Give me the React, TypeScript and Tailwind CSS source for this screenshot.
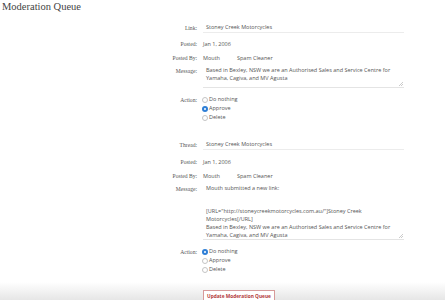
import React from "react";

const sans = { fontFamily: '"Open Sans", "Liberation Sans", sans-serif' };

function Label({ children }: { children: React.ReactNode }) {
  return (
    <div
      className="w-[197px] shrink-0 text-right text-[5.6px] leading-[8px] text-[#555]"
      style={{ fontFamily: '"Liberation Serif", serif' }}
    >
      {children}
    </div>
  );
}

function Radio({ checked, label }: { checked?: boolean; label: string }) {
  return (
    <div className="flex h-[9px] items-center gap-[1px] leading-[9px]">
      {checked ? (
        <span className="flex h-[6px] w-[6px] items-center justify-center rounded-full bg-[#2f7fd6]">
          <span className="h-[2px] w-[2px] rounded-full bg-white" />
        </span>
      ) : (
        <span className="h-[6px] w-[6px] rounded-full border border-[#c4c4c4] bg-white" />
      )}
      <span className="text-[5.5px] text-[#555]">{label}</span>
    </div>
  );
}

function Block({
  titleLabel,
  title,
  message,
  taHeight,
  checked,
  postedGap,
}: {
  titleLabel: string;
  title: string;
  message: string[];
  taHeight: string;
  checked: number;
  postedGap: string;
}) {
  return (
    <div className="flex flex-col">
      <div className="flex items-center">
        <Label>{titleLabel}</Label>
        <div className="ml-[6px] w-[201px] border-b border-[#ececec] pb-[1px] pl-[3px] pt-[1px] text-[5.5px] leading-[8px] text-[#555]">
          {title}
        </div>
      </div>
      <div className={`${postedGap} flex items-center`}>
        <Label>Posted:</Label>
        <div className="ml-[6px] text-[5.5px] leading-[8px] text-[#555]">Jan 1, 2006</div>
      </div>
      <div className="mt-[6px] flex items-center">
        <Label>Posted By:</Label>
        <div className="ml-[6px] flex gap-[17px] text-[5.5px] leading-[8px] text-[#555]">
          <span>Mouth</span>
          <span>Spam Cleaner</span>
        </div>
      </div>
      <div className="mt-[5px] flex items-start">
        <Label>Message:</Label>
        <div
          className={`relative ml-[6px] w-[201px] border-b border-[#e4e4e4] pl-[3px] text-[5.5px] leading-[7.8px] text-[#555] ${taHeight}`}
        >
          {message.map((l, i) => (
            <div key={i} className="h-[7.8px] whitespace-pre">
              {l}
            </div>
          ))}
          <svg className="absolute bottom-[1px] right-[1px]" width="4" height="4" viewBox="0 0 4 4">
            <path d="M0 4 L4 0 M2 4 L4 2" stroke="#aaa" strokeWidth="0.6" />
          </svg>
        </div>
      </div>
      <div className="mt-[7px] flex items-start">
        <Label>
          <span className="relative top-[1px]">Action:</span>
        </Label>
        <div className="ml-[5px] flex flex-col">
          <Radio checked={checked === 0} label="Do nothing" />
          <Radio checked={checked === 1} label="Approve" />
          <Radio checked={checked === 2} label="Delete" />
        </div>
      </div>
    </div>
  );
}

export default function App() {
  return (
    <div className="relative h-[300px] w-[445px] overflow-hidden bg-white" style={sans}>
      <div
        className="pl-[2px] pt-[0px] text-[10.5px] leading-[13px] text-[#444]"
        style={{ fontFamily: '"Liberation Serif", serif' }}
      >
        Moderation Queue
      </div>
      <div className="mt-[9px]">
        <Block
          titleLabel="Link:"
          title="Stoney Creek Motorcycles"
          message={["Based in Bexley, NSW we are an Authorised Sales and Service Centre for", "Yamaha, Cagiva, and MV Agusta"]}
          taHeight="h-[21px]"
          checked={1}
          postedGap="mt-[7px]"
        />
      </div>
      <div className="mt-[17px]">
        <Block
          titleLabel="Thread:"
          title="Stoney Creek Motorcycles"
          message={[
            "Mouth submitted a new link:",
            "",
            "",
            '[URL="http://stoneycreekmotorcycles.com.au/"]Stoney Creek',
            "Motorcycles[/URL]",
            "Based in Bexley, NSW we are an Authorised Sales and Service Centre for",
            "Yamaha, Cagiva, and MV Agusta",
          ]}
          taHeight="h-[55px]"
          checked={0}
          postedGap="mt-[8px]"
        />
      </div>
      <div className="pointer-events-none absolute bottom-0 left-0 h-[18px] w-[445px] bg-gradient-to-b from-transparent to-[#e6e6e6]" />
      <div className="absolute left-[203px] top-[290px] border border-[#d79a9a] bg-white px-[3px] py-[2px] text-[4.8px] font-bold leading-[7px] text-[#b23a3a]">
        Update Moderation Queue
      </div>
    </div>
  );
}
